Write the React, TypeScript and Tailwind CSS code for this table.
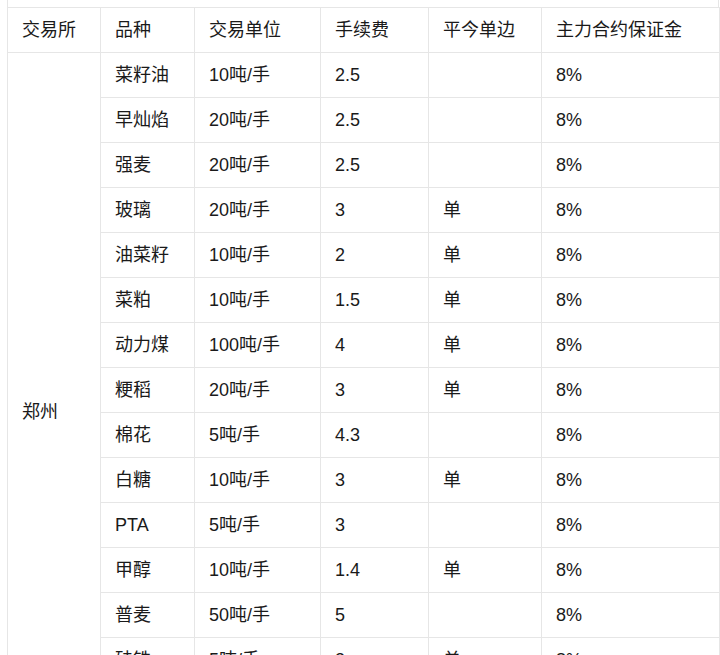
import React from "react";

const rows: [string, string, string, string][] = [
  ["菜籽油", "10吨/手", "2.5", ""],
  ["早灿焰", "20吨/手", "2.5", ""],
  ["强麦", "20吨/手", "2.5", ""],
  ["玻璃", "20吨/手", "3", "单"],
  ["油菜籽", "10吨/手", "2", "单"],
  ["菜粕", "10吨/手", "1.5", "单"],
  ["动力煤", "100吨/手", "4", "单"],
  ["粳稻", "20吨/手", "3", "单"],
  ["棉花", "5吨/手", "4.3", ""],
  ["白糖", "10吨/手", "3", "单"],
  ["PTA", "5吨/手", "3", ""],
  ["甲醇", "10吨/手", "1.4", "单"],
  ["普麦", "50吨/手", "5", ""],
  ["硅铁", "5吨/手", "3", "单"],
  ["锰硅", "5吨/手", "3", "单"],
  ["晚灿焰", "20吨/手", "3", ""],
];

const cell = "border border-[#e6e6e6] px-[14px] h-[45px] p-0 align-middle whitespace-nowrap";

export default function App() {
  return (
    <div
      className="bg-white w-[720px] h-[655px] overflow-hidden text-[18px] text-[#1a1a1a]"
      style={{ fontFamily: '"Liberation Sans", "Noto Sans CJK SC", sans-serif' }}
    >
      <div className="ml-[7px] w-[712px]">
        <div className="h-[7px] border-x border-[#e6e6e6]" />
        <table className="border-collapse table-fixed w-[712px]">
          <colgroup>
            <col className="w-[93px]" />
            <col className="w-[94px]" />
            <col className="w-[126px]" />
            <col className="w-[108px]" />
            <col className="w-[113px]" />
            <col className="w-[178px]" />
          </colgroup>
          <thead>
            <tr>
              <th className={`${cell} text-left font-normal`}>交易所</th>
              <th className={`${cell} text-left font-normal`}>品种</th>
              <th className={`${cell} text-left font-normal`}>交易单位</th>
              <th className={`${cell} text-left font-normal`}>手续费</th>
              <th className={`${cell} text-left font-normal`}>平今单边</th>
              <th className={`${cell} text-left font-normal`}>主力合约保证金</th>
            </tr>
          </thead>
          <tbody>
            {rows.map((r, i) => (
              <tr key={i}>
                {i === 0 && (
                  <td className={cell} rowSpan={rows.length}>
                    郑州
                  </td>
                )}
                <td className={cell}>{r[0]}</td>
                <td className={cell}>{r[1]}</td>
                <td className={cell}>{r[2]}</td>
                <td className={cell}>{r[3]}</td>
                <td className={cell}>8%</td>
              </tr>
            ))}
          </tbody>
        </table>
      </div>
    </div>
  );
}
